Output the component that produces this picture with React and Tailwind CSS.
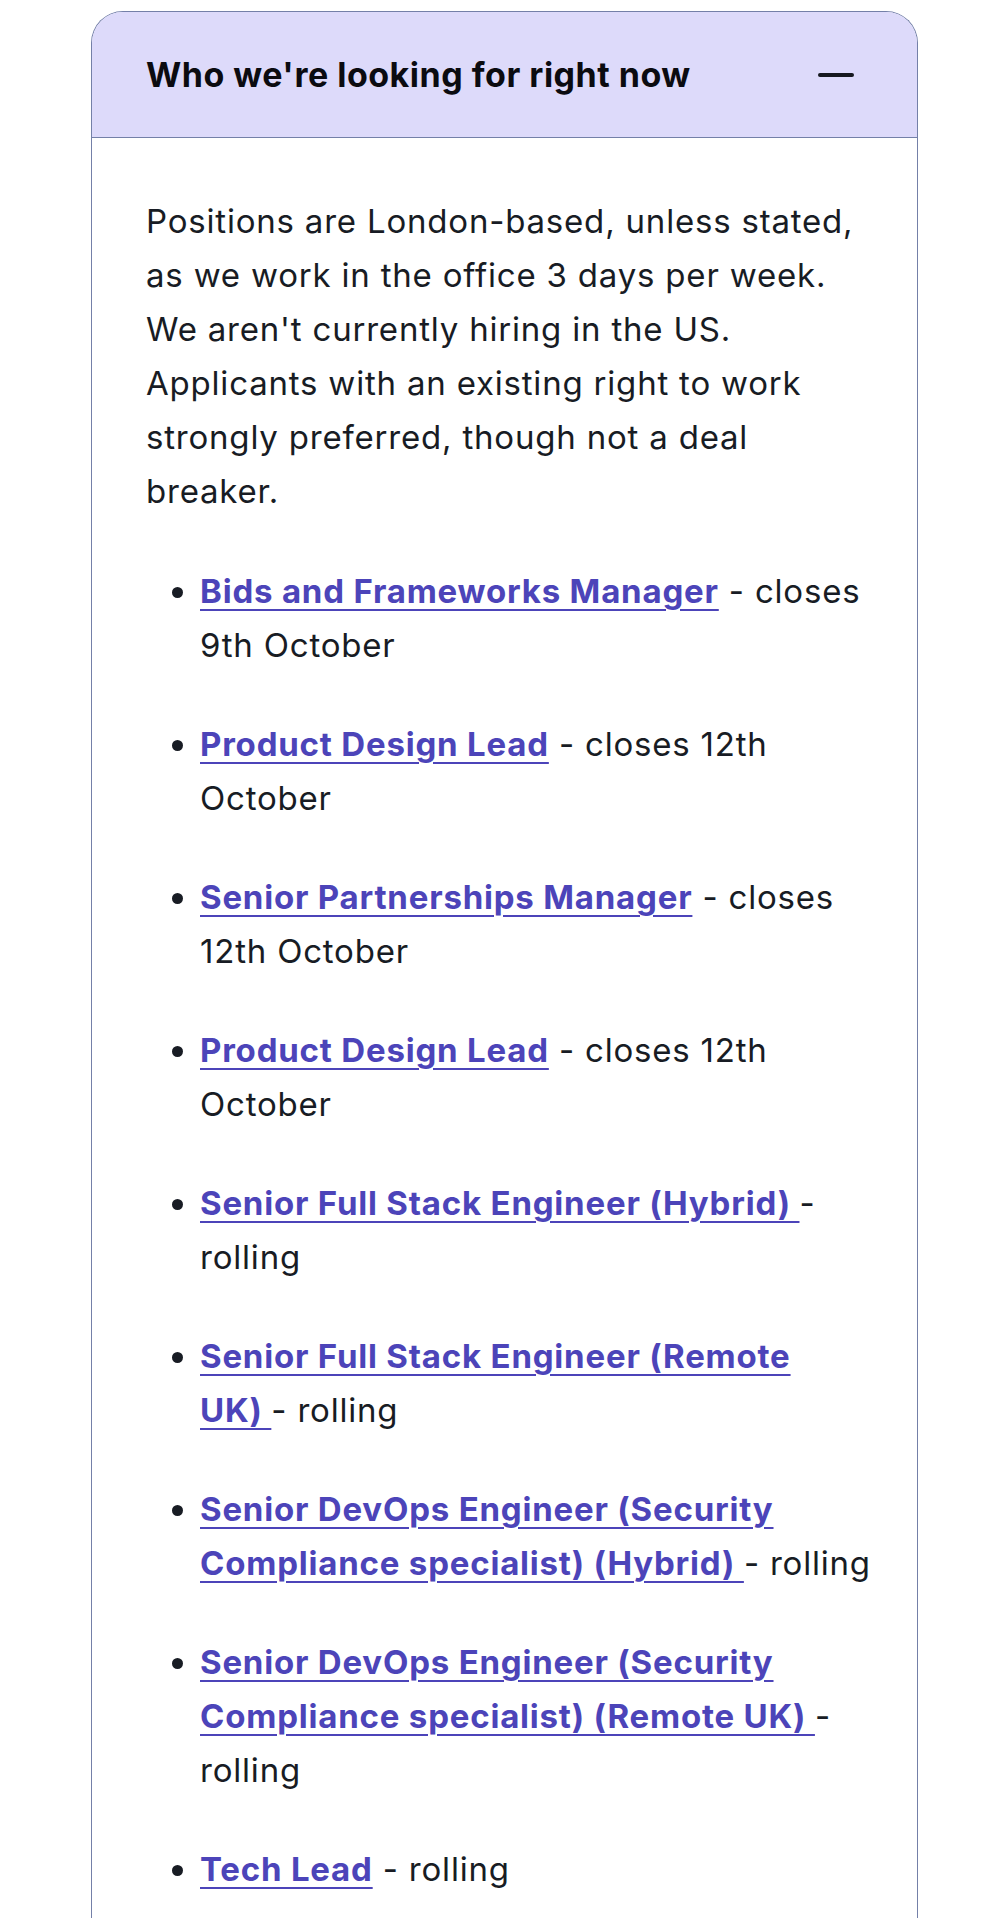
import React from "react";

const jobs = [
  { title: ["Bids and Frameworks Manager"], note: " - closes 9th October" },
  { title: ["Product Design Lead"], note: " - closes 12th October" },
  { title: ["Senior Partnerships Manager"], note: " - closes 12th October" },
  { title: ["Product Design Lead"], note: " - closes 12th October" },
  { title: ["Senior Full Stack Engineer (Hybrid) "], note: "- rolling" },
  { title: ["Senior Full Stack Engineer (Remote", "UK) "], note: "- rolling" },
  { title: ["Senior DevOps Engineer (Security Compliance specialist) (Hybrid) "], note: "- rolling" },
  { title: ["Senior DevOps Engineer (Security Compliance specialist) (Remote UK) "], note: "- rolling" },
  { title: ["Tech Lead"], note: " - rolling" },
];

export default function App() {
  return (
    <div className="min-h-screen bg-white pt-[11px] font-['Inter',sans-serif]">
      <div className="ml-[91px] w-[827px] min-h-[1907px] rounded-t-[32px] border-[1.5px] border-b-0 border-[#7480a8] overflow-hidden">
        <div className="flex h-[126px] items-center justify-between bg-[#dddafa] border-b-[1.5px] border-[#7480a8] pl-[54px] pr-[63px]">
          <h2 className="text-[34px] font-bold text-[#0b0b10] tracking-[0.5px]">
            Who we're looking for right now
          </h2>
          <span className="block h-[4px] w-[36px] rounded-full bg-[#16181f]" />
        </div>

        <div className="pl-[54px] pr-[44px] pt-[56px] pb-[60px] text-[33px] leading-[54px] tracking-[0.8px] text-[#181c24]">
          <p className="mb-[46px] mr-[10px]">
            Positions are London-based, unless stated, as we work in the office 3 days per week.
            We aren't currently hiring in the US. Applicants with an existing right to work
            strongly preferred, though not a deal breaker.
          </p>

          <ul className="list-disc pl-[54px] space-y-[45px] marker:text-[#181c24]">
            {jobs.map((job, i) => (
              <li key={i}>
                <a
                  href="#"
                  className="font-bold text-[#4c44b9] underline decoration-2 underline-offset-[6px]"
                >
                  {job.title.map((part, j) => (
                    <React.Fragment key={j}>
                      {j > 0 && <br />}
                      {part}
                    </React.Fragment>
                  ))}
                </a>
                {job.note}
              </li>
            ))}
          </ul>
        </div>
      </div>
    </div>
  );
}
